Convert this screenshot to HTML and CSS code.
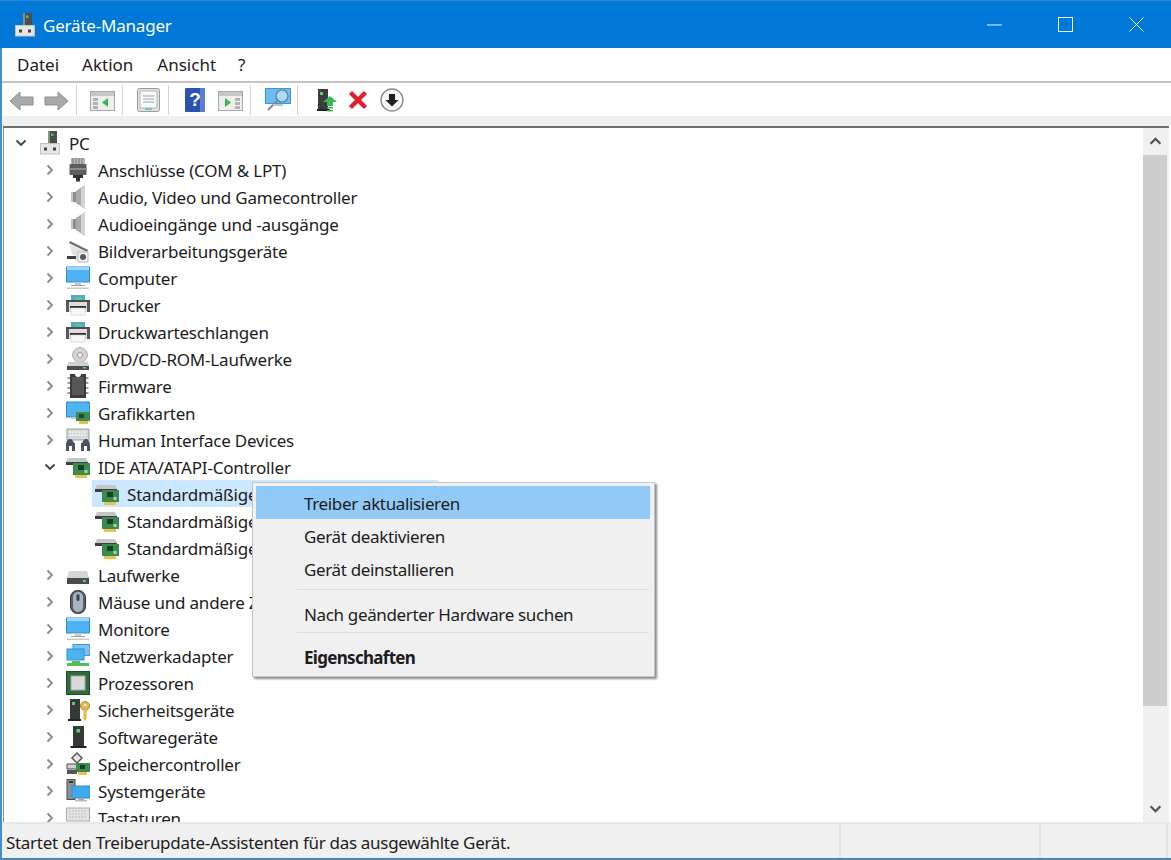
FILE: index.html
```html
<!DOCTYPE html>
<html lang="de">
<head>
<meta charset="utf-8">
<title>Geräte-Manager</title>
<link rel="stylesheet" href="styles.css">
</head>
<body>
<svg class="defs" width="0" height="0" aria-hidden="true">
  <defs>
    <symbol id="i-pc" viewBox="0 0 24 24">
      <rect x="11" y="0" width="9" height="13" fill="#4a4f4c"/><rect x="11" y="0" width="2" height="13" fill="#8b8f8c"/><rect x="14" y="2.500" width="2.500" height="2.500" fill="#55c060"/>
      <rect x="3.500" y="12.500" width="19" height="10.500" fill="#e6e6e4" stroke="#c2c2c0"/>
      <rect x="7" y="16.500" width="3" height="3" fill="#444"/><rect x="16" y="16.500" width="3" height="3" fill="#444"/>
    </symbol>
    <symbol id="i-port" viewBox="0 0 24 24">
      <rect x="5" y="0" width="14" height="6" fill="#b8b8b8"/><path d="M7 0v6M10 0v6M13 0v6M16 0v6" stroke="#777"/>
      <rect x="3.500" y="6" width="17" height="11" rx="1" fill="#5b5d5e"/><rect x="3.500" y="10" width="17" height="2" fill="#8a8c8d"/>
      <path d="M7 17h10v3h-3v3.500h-4V20H7z" fill="#333"/>
    </symbol>
    <symbol id="i-audio" viewBox="0 0 24 24">
      <rect x="5" y="7" width="5" height="10" fill="#c2c4c3"/><rect x="7" y="7" width="3" height="10" fill="#8c8e8d"/>
      <path d="M10 6l9-6v24l-9-6z" fill="#a9abaa"/><path d="M15 3l4-3v24l-4-3z" fill="#d3d4d3"/>
    </symbol>
    <symbol id="i-imaging" viewBox="0 0 24 24">
      <path d="M4 2l18 9-1 2L3 4z" fill="#6c6c6c"/><path d="M4 5l17 8v9H9v-6l-3-1z" fill="#e2e2e2"/>
      <rect x="1" y="17" width="9" height="3" fill="#3e3e3e"/><rect x="12" y="13" width="10" height="10" fill="#f1f1f1" stroke="#bbb"/>
      <circle cx="17" cy="18" r="3" fill="#56595a"/>
    </symbol>
    <symbol id="i-monitor" viewBox="0 0 24 24">
      <rect x="0.500" y="1" width="23" height="15" fill="#4fb3f2" stroke="#2c8fd6"/><path d="M1 1h22v3H1z" fill="#9ad8fb"/>
      <rect x="9" y="16" width="6" height="3" fill="#c5c7c8"/><rect x="5" y="19" width="14" height="1" fill="#9fa1a2"/><rect x="1" y="21.500" width="22" height="1.500" fill="#c7c9ca"/>
    </symbol>
    <symbol id="i-printer" viewBox="0 0 24 24">
      <rect x="5" y="2" width="14" height="7" fill="#4fa9d8"/><rect x="9" y="4" width="7" height="4" fill="#62c18f"/>
      <path d="M0 7h24v12H0z" fill="#dedede"/><path d="M0 7h24v2H0z" fill="#4e4e4e"/><path d="M0 9h3v10H0zM21 9h3v10h-3z" fill="#5a5a5a"/>
      <rect x="4" y="13" width="16" height="2" fill="#2f2f2f"/><rect x="5" y="15" width="14" height="7" fill="#f7f7f7" stroke="#c9c9c9" stroke-width=".6"/>
    </symbol>
    <symbol id="i-dvd" viewBox="0 0 24 24">
      <circle cx="14" cy="8" r="7.500" fill="#d3d3d3" stroke="#b5b5b5"/><circle cx="14" cy="8" r="2.500" fill="#f2f2f2" stroke="#999"/>
      <path d="M2 15h20l1 4H1z" fill="#cfd0d0"/><rect x="1" y="19" width="22" height="4" fill="#4c4e4d"/><rect x="17" y="20" width="3" height="1.500" fill="#5dd06b"/>
    </symbol>
    <symbol id="i-chip" viewBox="0 0 24 24">
      <rect x="1.500" y="3" width="3" height="2" fill="#999"/><rect x="1.500" y="8" width="3" height="2" fill="#999"/><rect x="1.500" y="13" width="3" height="2" fill="#999"/><rect x="1.500" y="18" width="3" height="2" fill="#999"/>
      <rect x="19.500" y="3" width="3" height="2" fill="#999"/><rect x="19.500" y="8" width="3" height="2" fill="#999"/><rect x="19.500" y="13" width="3" height="2" fill="#999"/><rect x="19.500" y="18" width="3" height="2" fill="#999"/>
      <path d="M4 0h5a3 3 0 0 0 6 0h5v24H4z" fill="#3a3b3b"/><path d="M6 3h12v18H6z" fill="#55575a"/>
    </symbol>
    <symbol id="i-gpu" viewBox="0 0 24 24">
      <rect x="0.500" y="1" width="23" height="15" fill="#4fb3f2" stroke="#2c8fd6"/><rect x="5" y="16" width="8" height="2" fill="#c5c7c8"/>
      <rect x="10" y="11" width="14" height="9" fill="#3f8b4f"/><rect x="13" y="13" width="5" height="4" fill="#1d4a28"/><rect x="13" y="20" width="9" height="3" fill="#e7c04a"/>
    </symbol>
    <symbol id="i-hid" viewBox="0 0 24 24">
      <rect x="1" y="1" width="22" height="11" fill="#d6d7d8" stroke="#9d9fa1"/><path d="M3 4h18M3 7h18" stroke="#f4f4f4" stroke-width="1.500" stroke-dasharray="2 1"/>
      <path d="M0 23v-5c0-5 2-7 4-7s3 2 4 4h1v8H6v-5H3v5z" fill="#4a5160"/><path d="M24 23v-5c0-5-2-7-4-7s-3 2-4 4h-1v8h3v-5h3v5z" fill="#4a5160"/>
    </symbol>
    <symbol id="i-ide" viewBox="0 0 24 24">
      <path d="M2 3h18l2 4H0z" fill="#c5c6c6"/><rect x="0" y="7" width="22" height="3" fill="#3d3e3e"/>
      <rect x="7" y="8" width="17" height="12" fill="#3b8a4e"/><rect x="12" y="10" width="6" height="5" fill="#17402a"/><rect x="18.500" y="15" width="3" height="3" fill="#a6d8a8"/>
      <rect x="9" y="20" width="12" height="3" fill="#e8c24a"/>
    </symbol>
    <symbol id="i-drive" viewBox="0 0 24 24">
      <path d="M3 8h18l2 7H1z" fill="#d4d5d5"/><rect x="1" y="15" width="22" height="6" fill="#4a4c4b"/><rect x="17" y="17" width="3" height="2" fill="#5dd06b"/>
    </symbol>
    <symbol id="i-mouse" viewBox="0 0 24 24">
      <rect x="4.500" y="0.500" width="15" height="23" rx="7" fill="#5a6068" stroke="#2f3237"/><rect x="7" y="2" width="10" height="20" rx="5" fill="#a7b4c2"/><rect x="10.500" y="4" width="3" height="7" rx="1.500" fill="#3b4046"/>
    </symbol>
    <symbol id="i-net" viewBox="0 0 24 24">
      <rect x="7" y="0.500" width="17" height="11" fill="#7cc4ef" stroke="#3f97d6"/><rect x="1" y="5" width="17" height="11" fill="#4fb3f2" stroke="#2c8fd6"/>
      <rect x="7" y="16" width="6" height="3" fill="#bbb"/><rect x="1" y="19" width="22" height="3" fill="#4cc05d"/><rect x="6" y="17" width="8" height="3" fill="#4cc05d"/>
    </symbol>
    <symbol id="i-cpu" viewBox="0 0 24 24">
      <rect x="0.500" y="0.500" width="23" height="23" fill="#2f6b3d" stroke="#1f4d2b"/><rect x="5" y="5" width="14" height="14" fill="#d8d9d8" stroke="#a9a9a9"/>
    </symbol>
    <symbol id="i-sec" viewBox="0 0 24 24">
      <rect x="4" y="1" width="10" height="20" fill="#35393a"/><rect x="6" y="4" width="3" height="3" fill="#5dd06b"/><rect x="2" y="21" width="13" height="2" fill="#222"/>
      <circle cx="19" cy="8" r="4.500" fill="#e9b84a" stroke="#b98b2a"/><circle cx="19" cy="7" r="1.300" fill="#fff"/><path d="M17.500 12h3v9l-1.500 2-1.500-2z" fill="#e9b84a"/>
    </symbol>
    <symbol id="i-soft" viewBox="0 0 24 24">
      <rect x="7" y="1" width="11" height="20" fill="#35393a"/><rect x="10.500" y="4" width="3.500" height="3.500" fill="#5dd06b"/><rect x="4.500" y="21" width="16" height="2" fill="#222"/>
    </symbol>
    <symbol id="i-storage" viewBox="0 0 24 24">
      <path d="M6 6l5-5 5 5-5 5z" fill="#e8e8e8" stroke="#5b5b5b" stroke-width="1.500"/><path d="M1 12h12v5H1z" fill="#cfcfcf" stroke="#4a4a4a"/>
      <rect x="10" y="11" width="14" height="9" fill="#3b8a4e"/><rect x="14" y="13" width="5" height="4" fill="#17402a"/><rect x="12" y="20" width="9" height="3" fill="#e8c24a"/><rect x="1" y="18" width="10" height="4" fill="#555"/>
    </symbol>
    <symbol id="i-sys" viewBox="0 0 24 24">
      <rect x="1" y="0.500" width="8" height="20" fill="#8f9192" stroke="#4b4d4e"/><rect x="3" y="2" width="4" height="2" fill="#333"/>
      <rect x="6" y="7" width="18" height="12" fill="#3fa9ee" stroke="#2c8fd6"/><rect x="12" y="19" width="6" height="2" fill="#aaa"/><rect x="9" y="21" width="12" height="1.500" fill="#bbb"/>
    </symbol>
    <symbol id="i-keyboard" viewBox="0 0 24 24">
      <rect x="0.500" y="2" width="23" height="13" fill="#e3e4e5" stroke="#a8aaac"/><path d="M3 5h18M3 8h18M3 11h18" stroke="#b8babc" stroke-dasharray="2 1"/>
    </symbol>
    <symbol id="chev-r" viewBox="0 0 12 12"><path d="M3.500 1.500L8 6l-4.500 4.500" fill="none" stroke="#8a8a8a" stroke-width="1.800"/></symbol>
    <symbol id="chev-d" viewBox="0 0 12 12"><path d="M1.500 3.500L6 8l4.500-4.500" fill="none" stroke="#404040" stroke-width="1.800"/></symbol>
  </defs>
</svg>

<div class="window">
  <header class="titlebar">
    <svg class="title-icon"><use href="#i-pc"/></svg>
    <span class="title-text">Geräte-Manager</span>
    <div class="caption">
      <svg class="cap" viewBox="0 0 16 16"><path d="M0 8.500h16" stroke="#fff"/></svg>
      <svg class="cap" viewBox="0 0 16 16"><rect x="0.500" y="0.500" width="15" height="15" fill="none" stroke="#fff"/></svg>
      <svg class="cap" viewBox="0 0 16 16"><path d="M0.500 0.500l15 15M15.500 0.500l-15 15" stroke="#fff" fill="none"/></svg>
    </div>
  </header>

  <nav class="menubar">
    <span class="m1">Datei</span><span class="m2">Aktion</span><span class="m3">Ansicht</span><span class="m4">?</span>
  </nav>

  <div class="toolbar">
    <svg class="tb arrow" viewBox="0 0 25 20"><path d="M1 10L11 1v5h13v8H11v5z" fill="#a9a9a9" stroke="#8f8f8f" stroke-linejoin="round"/></svg>
    <svg class="tb arrow a2" viewBox="0 0 25 20"><path d="M24 10L14 1v5H1v8h13v5z" fill="#a9a9a9" stroke="#8f8f8f" stroke-linejoin="round"/></svg>
    <i class="tsep s1"></i>
    <svg class="tb t-w" viewBox="0 0 25 20"><rect x="0.500" y="0.500" width="24" height="19" fill="#eeeeea" stroke="#a9a9a5"/><rect x="1" y="1" width="23" height="4" fill="#c7c7c3"/><path d="M3 7h5v3H3zM3 11h5v3H3zM3 15h5v3H3z" fill="#aeb4b4"/><path d="M18 7v9l-6-4.500z" fill="#43b15a"/></svg>
    <i class="tsep s2"></i>
    <svg class="tb t-doc" viewBox="0 0 23 24"><rect x="0.500" y="0.500" width="22" height="23" rx="2" fill="#e2e2df" stroke="#9a9a98"/><rect x="3" y="3" width="17" height="17" fill="#fafafa" stroke="#b5b5b3"/><path d="M6 8h11M6 11h11M6 14h11" stroke="#8fa4b4"/><rect x="8" y="20" width="7" height="2" fill="#7ab9e0"/></svg>
    <i class="tsep s3"></i>
    <svg class="tb t-help" viewBox="0 0 20 24"><rect width="20" height="24" rx="1" fill="#2a52b0"/><rect x="15" width="5" height="24" fill="#5b7fd0"/><text x="10" y="18" text-anchor="middle" class="qm">?</text></svg>
    <svg class="tb t-w2" viewBox="0 0 25 20"><rect x="0.500" y="0.500" width="24" height="19" fill="#eeeeea" stroke="#a9a9a5"/><rect x="1" y="1" width="23" height="4" fill="#c7c7c3"/><path d="M17 7h5v3h-5zM17 11h5v3h-5zM17 15h5v3h-5z" fill="#aeb4b4"/><path d="M7 7v9l6-4.500z" fill="#43b15a"/></svg>
    <i class="tsep s4"></i>
    <svg class="tb t-scan" viewBox="0 0 26 24"><rect x="0.500" y="0.500" width="25" height="15" fill="#6dbdf0" stroke="#3a96d8"/><circle cx="17" cy="8" r="6" fill="#a9dcf7" stroke="#5b7f98" stroke-width="1.200"/><path d="M12 13L3 22" stroke="#7c8a93" stroke-width="2"/><rect x="8" y="16" width="10" height="2" fill="#bfc4c6"/></svg>
    <i class="tsep s5"></i>
    <svg class="tb t-up" viewBox="0 0 20 24"><rect x="1" y="1" width="10" height="20" fill="#3a3e3e"/><rect x="3" y="4" width="3" height="3" fill="#5dd06b"/><rect y="21" width="13" height="2" fill="#222"/><path d="M13 8l7 6h-4v4h-6v-4H6z" fill="#37b957"/><rect x="10" y="19" width="6" height="1.500" fill="#37b957"/><rect x="10" y="22" width="6" height="1.500" fill="#37b957"/></svg>
    <svg class="tb t-x" viewBox="0 0 20 20"><path d="M2.500 2.500l15 15M17.500 2.500l-15 15" stroke="#e0202c" stroke-width="4.500"/></svg>
    <svg class="tb t-dl" viewBox="0 0 24 24"><circle cx="12" cy="12" r="11" fill="#f8f8f8" stroke="#8c8c8c" stroke-width="1.400"/><path d="M9 6h6v6h3.500L12 18.500 5.500 12H9z" fill="#1f1f1f"/></svg>
  </div>

  <div class="band"></div>

  <main class="content">
    <div class="tree">
      <div class="row l0"><svg class="chev"><use href="#chev-d"/></svg><span class="node"><svg class="ico"><use href="#i-pc"/></svg><span>PC</span></span></div>
      <div class="row l1"><svg class="chev"><use href="#chev-r"/></svg><span class="node"><svg class="ico"><use href="#i-port"/></svg><span>Anschlüsse (COM &amp; LPT)</span></span></div>
      <div class="row l1"><svg class="chev"><use href="#chev-r"/></svg><span class="node"><svg class="ico"><use href="#i-audio"/></svg><span>Audio, Video und Gamecontroller</span></span></div>
      <div class="row l1"><svg class="chev"><use href="#chev-r"/></svg><span class="node"><svg class="ico"><use href="#i-audio"/></svg><span>Audioeingänge und -ausgänge</span></span></div>
      <div class="row l1"><svg class="chev"><use href="#chev-r"/></svg><span class="node"><svg class="ico"><use href="#i-imaging"/></svg><span>Bildverarbeitungsgeräte</span></span></div>
      <div class="row l1"><svg class="chev"><use href="#chev-r"/></svg><span class="node"><svg class="ico"><use href="#i-monitor"/></svg><span>Computer</span></span></div>
      <div class="row l1"><svg class="chev"><use href="#chev-r"/></svg><span class="node"><svg class="ico"><use href="#i-printer"/></svg><span>Drucker</span></span></div>
      <div class="row l1"><svg class="chev"><use href="#chev-r"/></svg><span class="node"><svg class="ico"><use href="#i-printer"/></svg><span>Druckwarteschlangen</span></span></div>
      <div class="row l1"><svg class="chev"><use href="#chev-r"/></svg><span class="node"><svg class="ico"><use href="#i-dvd"/></svg><span>DVD/CD-ROM-Laufwerke</span></span></div>
      <div class="row l1"><svg class="chev"><use href="#chev-r"/></svg><span class="node"><svg class="ico"><use href="#i-chip"/></svg><span>Firmware</span></span></div>
      <div class="row l1"><svg class="chev"><use href="#chev-r"/></svg><span class="node"><svg class="ico"><use href="#i-gpu"/></svg><span>Grafikkarten</span></span></div>
      <div class="row l1"><svg class="chev"><use href="#chev-r"/></svg><span class="node"><svg class="ico"><use href="#i-hid"/></svg><span>Human Interface Devices</span></span></div>
      <div class="row l1"><svg class="chev"><use href="#chev-d"/></svg><span class="node"><svg class="ico"><use href="#i-ide"/></svg><span>IDE ATA/ATAPI-Controller</span></span></div>
      <div class="row l2"><span class="chev"></span><span class="node selected"><svg class="ico"><use href="#i-ide"/></svg><span>Standardmäßiger SATA AHCI-Controller</span></span></div>
      <div class="row l2"><span class="chev"></span><span class="node"><svg class="ico"><use href="#i-ide"/></svg><span>Standardmäßiger SATA AHCI-Controller</span></span></div>
      <div class="row l2"><span class="chev"></span><span class="node"><svg class="ico"><use href="#i-ide"/></svg><span>Standardmäßiger SATA AHCI-Controller</span></span></div>
      <div class="row l1"><svg class="chev"><use href="#chev-r"/></svg><span class="node"><svg class="ico"><use href="#i-drive"/></svg><span>Laufwerke</span></span></div>
      <div class="row l1"><svg class="chev"><use href="#chev-r"/></svg><span class="node"><svg class="ico"><use href="#i-mouse"/></svg><span>Mäuse und andere Zeigegeräte</span></span></div>
      <div class="row l1"><svg class="chev"><use href="#chev-r"/></svg><span class="node"><svg class="ico"><use href="#i-monitor"/></svg><span>Monitore</span></span></div>
      <div class="row l1"><svg class="chev"><use href="#chev-r"/></svg><span class="node"><svg class="ico"><use href="#i-net"/></svg><span>Netzwerkadapter</span></span></div>
      <div class="row l1"><svg class="chev"><use href="#chev-r"/></svg><span class="node"><svg class="ico"><use href="#i-cpu"/></svg><span>Prozessoren</span></span></div>
      <div class="row l1"><svg class="chev"><use href="#chev-r"/></svg><span class="node"><svg class="ico"><use href="#i-sec"/></svg><span>Sicherheitsgeräte</span></span></div>
      <div class="row l1"><svg class="chev"><use href="#chev-r"/></svg><span class="node"><svg class="ico"><use href="#i-soft"/></svg><span>Softwaregeräte</span></span></div>
      <div class="row l1"><svg class="chev"><use href="#chev-r"/></svg><span class="node"><svg class="ico"><use href="#i-storage"/></svg><span>Speichercontroller</span></span></div>
      <div class="row l1"><svg class="chev"><use href="#chev-r"/></svg><span class="node"><svg class="ico"><use href="#i-sys"/></svg><span>Systemgeräte</span></span></div>
      <div class="row l1"><svg class="chev"><use href="#chev-r"/></svg><span class="node"><svg class="ico"><use href="#i-keyboard"/></svg><span>Tastaturen</span></span></div>
    </div>
    <aside class="scrollbar">
      <svg class="sb-btn" viewBox="0 0 12 12"><path d="M1.500 8L6 3.500 10.500 8" fill="none" stroke="#505050" stroke-width="2"/></svg>
      <div class="thumb"></div>
      <svg class="sb-btn sb-end" viewBox="0 0 12 12"><path d="M1.500 4L6 8.500 10.500 4" fill="none" stroke="#505050" stroke-width="2"/></svg>
    </aside>
  </main>

  <footer class="statusbar">
    <span class="st-main">Startet den Treiberupdate-Assistenten für das ausgewählte Gerät.</span>
    <span class="st-cell c1"></span>
    <span class="st-cell c2"></span>
  </footer>

  <div class="ctx">
    <div class="ctx-item hot">Treiber aktualisieren</div>
    <div class="ctx-item">Gerät deaktivieren</div>
    <div class="ctx-item">Gerät deinstallieren</div>
    <div class="ctx-sep first"></div>
    <div class="ctx-item">Nach geänderter Hardware suchen</div>
    <div class="ctx-sep"></div>
    <div class="ctx-item strong">Eigenschaften</div>
  </div>
</div>
</body>
</html>
```

FILE: styles.css
```css
* { box-sizing: border-box; }
html, body { margin: 0; padding: 0; height: 100%; overflow: hidden; }
body { font-family: "Noto Sans", "Open Sans", sans-serif; font-size: 17px; color: #1c1c1c; background: #fff; }
.defs { position: absolute; }

.window { position: relative; width: 1171px; height: 860px; display: flex; flex-direction: column; border-left: 2px solid #3d8fd6; border-bottom: 2px solid #4a86b8; background: #fff; }

.titlebar { height: 48px; flex: none; margin-left: -2px; background: #0078d7; border-top: 1px solid #2a86d0; display: flex; align-items: center; padding-left: 12px; color: #fff; }
.title-icon { width: 24px; height: 24px; flex: none; }
.title-text { margin-left: 7px; font-size: 17px; letter-spacing: -0.2px; padding-top: 2px; }
.caption { margin-left: auto; display: flex; align-items: center; gap: 56px; padding-right: 27px; }
.cap { width: 15px; height: 15px; display: block; }

.menubar { height: 35px; flex: none; display: flex; align-items: center; border-bottom: 2px solid #c4c4c4; padding-left: 15px; }
.m1 { margin-right: 23px; }
.m2 { margin-right: 24px; }
.m3 { margin-right: 22px; }

.toolbar { height: 33px; flex: none; display: flex; align-items: center; padding-left: 7px; background: #fff; }
.tb { display: block; flex: none; }
.arrow { width: 25px; height: 20px; margin-top: 2px; }
.a2 { margin-left: 10px; }
.tsep { display: block; width: 1px; height: 30px; background: #d4d4d4; flex: none; }
.s1 { margin-left: 7px; margin-right: 13px; }
.t-w { width: 25px; height: 20px; margin-top: 3px; }
.s2 { margin-left: 7px; margin-right: 14px; }
.t-doc { width: 23px; height: 24px; }
.s3 { margin-left: 8px; margin-right: 16px; }
.t-help { width: 20px; height: 24px; }
.qm { font-family: "Liberation Sans", sans-serif; font-size: 19px; font-weight: 700; fill: #fff; }
.t-w2 { width: 25px; height: 20px; margin-left: 13px; margin-top: 3px; }
.s4 { margin-left: 7px; margin-right: 14px; }
.t-scan { width: 26px; height: 24px; }
.s5 { margin-left: 6px; margin-right: 19px; }
.t-up { width: 20px; height: 24px; }
.t-x { width: 20px; height: 20px; margin-left: 11px; }
.t-dl { width: 24px; height: 24px; margin-left: 12px; }

.band { height: 10px; flex: none; background: #f0f0f0; }

.content { flex: 1 1 auto; min-height: 0; display: flex; margin-left: 1px; margin-right: 2px; border-top: 2px solid #707070; border-left: 1px solid #8d8d8d; overflow: hidden; }
.tree { flex: 1 1 auto; min-width: 0; overflow: hidden; padding-top: 1px; }
.row { height: 27px; display: flex; align-items: center; white-space: nowrap; }
.l0 { padding-left: 9px; }
.l1 { padding-left: 38px; }
.l2 { padding-left: 67px; }
.chev { width: 16px; height: 12px; flex: none; display: block; }
.node { display: flex; align-items: center; height: 27px; margin-left: 5px; padding-left: 3px; padding-right: 6px; }
.selected { background: #cce8ff; }
.ico { width: 24px; height: 24px; flex: none; display: block; margin-right: 8px; }
.node span { line-height: 27px; letter-spacing: -0.2px; padding-top: 2px; }

.scrollbar { width: 26px; flex: none; background: #f0f0f0; display: flex; flex-direction: column; align-items: center; padding-right: 2px; }
.sb-btn { width: 13px; height: 27px; flex: none; display: block; }
.thumb { align-self: stretch; height: 551px; background: #cdcdcd; flex: none; }
.sb-end { margin-top: auto; }

.statusbar { height: 36px; flex: none; display: flex; align-items: stretch; background: #f0f0f0; border-top: 2px solid #e8e8e8; font-size: 17px; padding-left: 4px; }
.st-main { width: 835px; flex: none; display: flex; align-items: center; padding-top: 2px; letter-spacing: -0.3px; border-right: 2px solid #e2e2e2; }
.st-cell { flex: none; border-right: 2px solid #e2e2e2; }
.c1 { width: 200px; }
.c2 { width: 127px; }

.ctx { position: absolute; left: 250px; top: 482px; width: 403px; height: 195px; padding: 3px 4px 3px 3px; background: #f0f0f0; border: 1px solid #c6c6c6; box-shadow: 2px 2px 2px rgba(0, 0, 0, .45); }
.ctx-item { height: 33px; line-height: 35px; padding-left: 48px; letter-spacing: -0.35px; }
.hot { background: #91c9f7; }
.ctx-sep { height: 1px; margin: 2px 1px 7px 41px; background: #dcdcdc; }
.first { margin-top: 4px; }
.strong { font-weight: 700; letter-spacing: -0.7px; }
```
